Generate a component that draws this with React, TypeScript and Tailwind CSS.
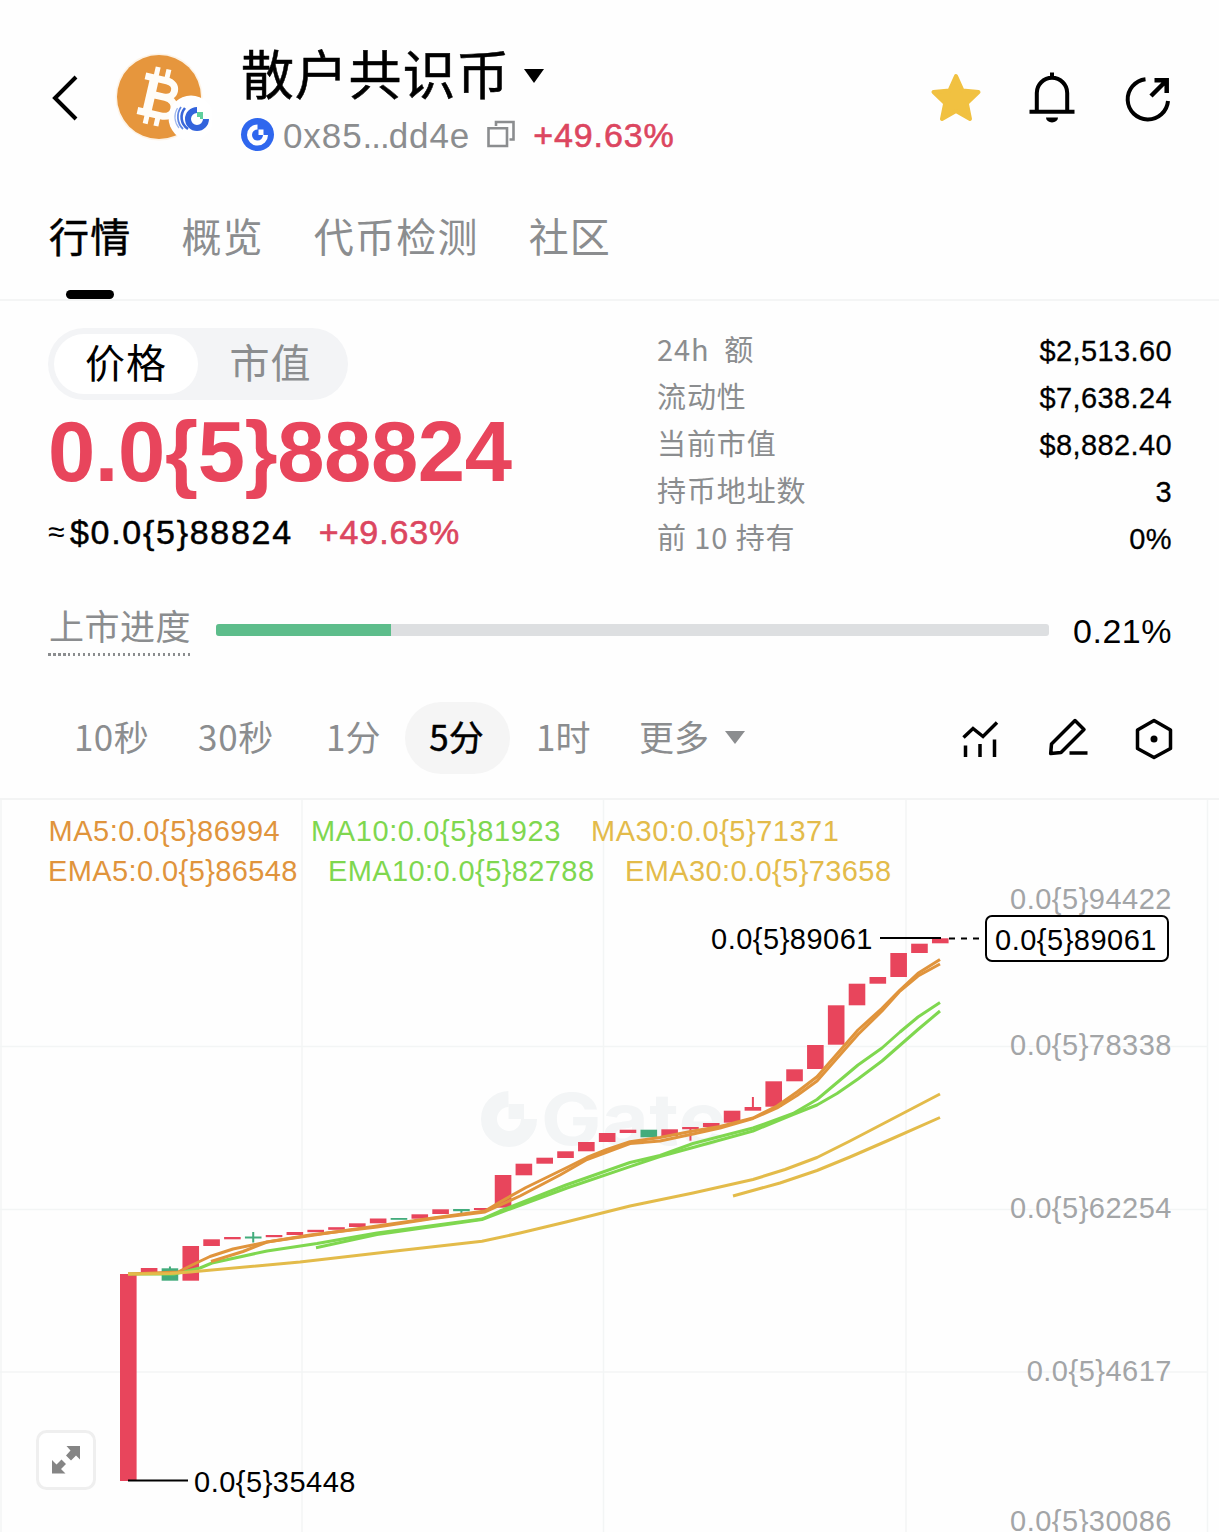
import React from "react";

const UP = "#e8455c";
const DOWN = "#43ac7c";

const tabs = ["行情", "概览", "代币检测", "社区"];

const stats = [
  { label: "24h  额", value: "$2,513.60" },
  { label: "流动性", value: "$7,638.24" },
  { label: "当前市值", value: "$8,882.40" },
  { label: "持币地址数", value: "3" },
  { label: "前 10 持有", value: "0%" },
];

// body top, body bottom, wick top, wick bottom, falling
type Candle = [number, number, number?, number?, boolean?];

const candles: Candle[] = [
  [1274, 1481],
  [1268, 1272.5],
  [1268.3, 1280.7, 1266.5, 1280, true],
  [1246, 1280.7],
  [1239.3, 1246],
  [1237, 1239.3],
  [1236.5, 1238.5, 1232, 1242.5, true],
  [1235, 1237.2],
  [1232, 1235],
  [1229.8, 1232.2],
  [1227.2, 1229.8],
  [1223.3, 1227],
  [1218.5, 1223.3],
  [1218, 1219.8, 1218, 1219, true],
  [1214.3, 1218.7],
  [1209.3, 1214],
  [1209, 1211.2, 1209, 1213, true],
  [1208, 1210],
  [1175, 1207.7],
  [1163.7, 1175.3],
  [1157.7, 1163.7],
  [1151.3, 1158],
  [1142, 1151.3],
  [1133, 1142],
  [1129.7, 1133],
  [1129.7, 1137.3, 1130, 1137, true],
  [1129.3, 1136],
  [1127, 1129.2, 1127, 1140.7],
  [1123, 1127],
  [1110.7, 1122.7],
  [1107, 1110.7, 1097, 1110],
  [1081.3, 1106.7],
  [1069.3, 1081.3],
  [1045, 1069],
  [1005.3, 1044.7],
  [983.7, 1005.3],
  [977, 983.7],
  [953, 977],
  [943.7, 953],
  [938.3, 943.3],
];

const lines = [
  {
    color: "#7fd74f",
    points:
      "128,1274 174,1274 200,1268 212,1263 267,1251 317,1243.5 377,1233 482,1219 500,1211 566,1185 630,1162.5 660,1155.5 693,1143.5 753,1128 793,1113.5 817,1099.5 858,1065 882,1048 900,1032 918,1017 940,1002.5",
  },
  {
    color: "#7fd74f",
    points:
      "316,1247.7 377,1234.5 482,1219.5 510,1209 567,1188 630,1166.7 660,1156.5 693,1147.5 753,1131 793,1114.5 817,1105 837,1093.5 858,1079 882,1061 918,1029.5 940,1011",
  },
  {
    color: "#e0943c",
    points:
      "128,1274 178,1272 190,1266 210,1256.5 233,1249 267,1242 333,1232.3 377,1226 433,1218 485,1211 500,1202 526,1187.5 567,1167.5 587,1157.5 607,1149.3 630,1141.7 660,1137.5 693,1131 720,1126.5 753,1118 777,1106 797,1092 817,1076.7 858,1030 882,1008.3 900,990 918,973.3 940,959.5",
  },
  {
    color: "#e0943c",
    points:
      "211,1261.5 243,1251.5 267,1242 310,1235 377,1227 433,1218.5 485,1212 520,1196 560,1175 587,1159.5 630,1143.5 660,1141 693,1134 720,1128 753,1118.5 777,1108 797,1095.5 817,1081 858,1034.5 882,1011 900,991 918,976 940,964",
  },
  {
    color: "#e3bb4a",
    points:
      "128,1274 170,1273.5 190,1272 300,1262 400,1250.5 482,1241.3 520,1233 566,1222 630,1206 693,1193 753,1179.5 785,1169.5 817,1157.5 850,1141 940,1094",
  },
  { color: "#e3bb4a", points: "733,1196 780,1183 817,1170.5 850,1157 888,1140.5 940,1117.5" },
];

const axis = [
  { y: 909, text: "0.0{5}94422" },
  { y: 1055, text: "0.0{5}78338" },
  { y: 1218, text: "0.0{5}62254" },
  { y: 1381, text: "0.0{5}4617" },
  { y: 1531, text: "0.0{5}30086" },
];

const cjk = "font-['Noto_Sans_CJK_SC',sans-serif]";

const TokenLogo: React.FC = () => (
  <svg viewBox="0 0 100 96" className="h-24 w-[100px] shrink-0">
    <circle cx="47" cy="49" r="43.500" fill="#fdf3e6" />
    <circle cx="47" cy="49" r="42" fill="#e6963d" />
    <g transform="rotate(13 47 49)" fill="none" stroke="#fffdf8">
      <path d="M29 31.500H51C64 31.500 64 48 51 48H39M39 48H53C68 48 68 67 53 67H29" strokeWidth="7" />
      <path d="M38.500 31V67" strokeWidth="9" />
      <path d="M39.500 20V32M50.500 20V32M39.500 66V78M50.500 66V78" strokeWidth="5" />
    </g>
    <circle cx="79" cy="70" r="22.500" fill="#fff" />
    <path d="M73 60A14 14 0 0 0 76 81" fill="none" stroke="#3a67d9" strokeWidth="2.600" />
    <path d="M69 59A17 17 0 0 0 71 81" fill="none" stroke="#5f86e2" strokeWidth="1.800" />
    <path d="M65.500 60A17 17 0 0 0 67 80" fill="none" stroke="#9db5ec" strokeWidth="1.200" />
    <path d="M85 62A9 9 0 1 0 94 71" fill="none" stroke="#3263dc" strokeWidth="6" />
    <path d="M85 64H91V71H88V69H85Z" fill="#5fcf9d" />
  </svg>
);

const Header: React.FC = () => (
  <header className="flex h-[170px] items-start pl-[50px] pr-12">
    <svg viewBox="0 0 28 46" className="mt-[75px] h-[46px] w-7 shrink-0" fill="none" stroke="#000" strokeWidth="4">
      <path d="M26 2L5 23L26 44" />
    </svg>
    <div className="ml-[34px] mt-12">
      <TokenLogo />
    </div>
    <div className="ml-[29px] mt-[42px]">
      <div className={`flex h-[64px] items-start ${cjk}`}>
        <h1 className="whitespace-nowrap text-[53px] leading-[60px] tracking-[0.8px] [-webkit-text-stroke:0.5px]">散户共识币</h1>
        <svg viewBox="0 0 20 14" className="ml-3.5 mt-[27px] h-3.5 w-5">
          <path d="M0 0H20L10 14Z" />
        </svg>
      </div>
      <div className="flex h-14 items-center">
        <div className="flex h-[33px] w-[33px] items-center justify-center rounded-full bg-[#2f67ee]">
          <svg viewBox="0 0 33 33" className="h-[33px] w-[33px]">
            <path d="M16.500 9A8 8 0 1 0 24.500 17" fill="none" stroke="#fff" strokeWidth="5" />
            <path d="M17.500 11.500H22.500V17H17.500Z" fill="#fff" />
          </svg>
        </div>
        <span className="ml-[9px] mt-[3px] text-[35px] leading-10 tracking-[0.9px] text-[#8b8d8f]">
          0x85<span className="tracking-[-1px]">...</span>dd4e
        </span>
        <svg viewBox="0 0 28 28" className="ml-[17px] h-7 w-7" fill="none" stroke="#8b8d8f" strokeWidth="2.600">
          <path d="M1.500 8.300H20V26H1.500ZM9 6V2H26.500V19.500H22.500" />
        </svg>
        <span className="ml-[18px] mt-0.5 text-[34px] leading-10 tracking-[0.9px] text-[#dc4660] [-webkit-text-stroke:0.6px]">+49.63%</span>
      </div>
    </div>
    <div className="ml-auto mt-[72px] flex items-center">
      <svg viewBox="0 0 52 52" className="h-[52px] w-[52px]">
        <path
          d="M26 4L32.500 18.500L48.500 20L36.800 31.200L40 47L26 39L12 47L15.200 31.200L3.500 20L19.500 18.500Z"
          fill="#f1c141"
          stroke="#f1c141"
          strokeWidth="4"
          strokeLinejoin="round"
        />
      </svg>
      <svg viewBox="0 0 48 52" className="ml-[46px] h-[52px] w-12" fill="none" stroke="#000" strokeWidth="4">
        <path d="M1.500 39.700H46.500M8.800 39V21A15.200 15.200 0 0 1 39.200 21V39M24 6V0.500" />
        <path d="M18 45.500H30A6 5 0 0 1 18 45.500Z" fill="#000" stroke="none" />
      </svg>
      <svg viewBox="0 0 46 52" className="ml-[49px] h-[52px] w-[46px]" fill="none" stroke="#000" strokeWidth="4">
        <path d="M20.500 7.200A20.200 20.200 0 1 0 43 29" />
        <path d="M26 24L42 8M29.500 8.300H41.700V21" strokeWidth="4.500" />
      </svg>
    </div>
  </header>
);

const Tabs: React.FC = () => (
  <nav className={`flex h-[131px] gap-[50px] border-b-2 border-[#f4f5f5] pl-[49px] pt-[35px] text-[40px] tracking-[1.2px] ${cjk}`}>
    {tabs.map((tab, i) => (
      <div key={tab} className="flex flex-col items-center">
        <span className={i === 0 ? "leading-[61px] text-black [-webkit-text-stroke:0.5px]" : "leading-[61px] text-[#8b8d8f]"}>{tab}</span>
        {i === 0 && <span className="mt-6 h-[9px] w-12 shrink-0 rounded-full bg-black" />}
      </div>
    ))}
  </nav>
);

const PriceSummary: React.FC = () => (
  <section className="flex h-[259px] justify-between pl-12 pr-[47px] pt-[27px]">
    <div>
      <div className={`flex h-[72px] w-[300px] items-center rounded-full bg-[#f3f4f6] p-1.5 text-[40px] tracking-[1px] ${cjk}`}>
        <span className="flex h-[60px] w-36 items-center justify-center rounded-full bg-white pb-1.5 leading-none">价格</span>
        <span className="flex h-[60px] w-36 items-center justify-center pb-1.5 pl-px leading-none text-[#8b8d8f]">市值</span>
      </div>
      <div className="mt-[7px] h-[90px] whitespace-nowrap text-[85px] font-bold leading-[90px] tracking-[-0.4px] text-[#e8455c]">0.0{"{5}"}88824</div>
      <div className="mt-[15px] flex h-10 items-center whitespace-nowrap text-[34px] leading-10 tracking-[1.7px]">
        <span className="w-[22px] text-[30px] tracking-normal">≈</span>
        <span className="[-webkit-text-stroke:0.5px]">$0.0{"{5}"}88824</span>
        <span className="ml-[26px] tracking-[0.9px] text-[#dc4660] [-webkit-text-stroke:0.6px]">+49.63%</span>
      </div>
    </div>
    <div className="-mt-[3px] w-[516px]">
      {stats.map((row) => (
        <div key={row.label} className="flex h-[47px] items-center justify-between whitespace-pre">
          <span className={`pl-px text-[29px] leading-[47px] tracking-[0.9px] text-[#8b8d8f] ${cjk}`}>{row.label}</span>
          <span className="mt-1.5 text-[29px] leading-[47px] tracking-[0.4px] [-webkit-text-stroke:0.3px]">{row.value}</span>
        </div>
      ))}
    </div>
  </section>
);

const Progress: React.FC = () => (
  <section className="flex h-[142px] items-start pl-12 pr-[47px] pt-[43px]">
    <span className={`h-[53px] w-[142px] whitespace-nowrap bg-[repeating-linear-gradient(90deg,#8b8d8f_0_2.5px,transparent_2.5px_5px)] bg-[length:100%_3px] bg-bottom bg-no-repeat pl-px text-[35px] leading-[44px] tracking-[0.5px] text-[#8b8d8f] ${cjk}`}>
      上市进度
    </span>
    <div className="ml-[26px] mt-[21px] h-3 w-[833px] overflow-hidden rounded-[3px] bg-[#dddfe1]">
      <div className="h-full w-[175px] bg-[#5dbd8b]" />
    </div>
    <span className="ml-auto mt-2 text-[34px] leading-10 tracking-[0.5px]">0.21%</span>
  </section>
);

const Intervals: React.FC = () => (
  <section className={`flex h-[98px] items-start border-b-2 border-[#f3f4f4] text-[35px] leading-[67px] text-[#8b8d8f] ${cjk}`}>
    <span className="ml-[74px] w-[124px] tracking-[0.4px]">10秒</span>
    <span className="w-[128px] tracking-[0.7px]">30秒</span>
    <span className="w-[79px]">1分</span>
    <span className="h-[72px] w-[105px] rounded-full bg-[#f5f5f5] pr-0.5 text-center text-black [-webkit-text-stroke:0.5px]">5分</span>
    <span className="ml-[26px] w-[103px]">1时</span>
    <span className="w-[72px]">更多</span>
    <svg viewBox="0 0 20 13" className="ml-[14px] mt-[29px] h-[13px] w-5" fill="#8b8d8f">
      <path d="M0 0H20L10 13Z" />
    </svg>
    <div className="ml-auto mr-[45px] mt-[15px] flex gap-[46px]">
      <svg viewBox="0 0 40 44" className="h-11 w-10" fill="none" stroke="#000" strokeWidth="3.500">
        <path d="M1.500 20.500L11 11.500L21 19.500L35 5.500M3.500 28.500V40M18 27V40M32.500 22.500V40" />
      </svg>
      <svg viewBox="0 0 40 44" className="h-11 w-10" fill="none" stroke="#000" strokeWidth="3.500" strokeLinejoin="round">
        <path d="M27 3.500L36 12.500L13 35.500L2.700 36.500L3.500 27ZM21.500 36H39.500" />
      </svg>
      <svg viewBox="0 0 40 44" className="h-11 w-10" fill="none" stroke="#000" strokeWidth="3.500" strokeLinejoin="round">
        <path d="M20 3.500L36.500 13V31.500L20 40.500L3.500 31.500V13Z" />
        <circle cx="20" cy="22" r="3.500" fill="#000" stroke="none" />
      </svg>
    </div>
  </section>
);

const Chart: React.FC = () => (
  <svg viewBox="0 800 1219 732" className="block h-[732px] w-full font-['Liberation_Sans',Arial,sans-serif] text-[29px] tracking-[0.5px]">
    <path d="M1 800V1532M302 800V1532M603.500 800V1532M906 800V1532M1207.500 800V1532M0 1046.500H1207M0 1209.500H1207M0 1372H1207" stroke="#f3f5f5" strokeWidth="1.500" fill="none" />
    <g fill="none" stroke="#f3f5f6">
      <path d="M508.500 1099A20 20 0 1 0 529 1119" strokeWidth="16" />
      <path d="M508.500 1104H524V1119H508.500Z" fill="#f3f5f6" stroke="none" />
    </g>
    <text x="541" y="1145" fill="#f3f5f6" textLength="186" lengthAdjust="spacingAndGlyphs" className="font-['Inter',sans-serif] text-[72px] font-bold">Gate</text>

    {candles.map(([top, bottom, high, low, falling], i) => {
      const x = 128.3 + i * 20.82;
      const color = falling ? DOWN : UP;
      return (
        <g key={i} fill={color}>
          <rect x={x - 8.3} y={top} width={16.6} height={bottom - top} />
          {high && low && <rect x={x - 1} y={high} width={2} height={low - high} />}
        </g>
      );
    })}
    {lines.map((line) => (
      <polyline key={line.points} points={line.points} fill="none" stroke={line.color} strokeWidth="3" strokeLinejoin="round" />
    ))}

    <g fill="#e0943c">
      <text x="48.500" y="841">MA5:0.0{"{5}"}86994</text>
      <text x="48" y="881" className="tracking-[0.4px]">EMA5:0.0{"{5}"}86548</text>
    </g>
    <g fill="#7fd74f">
      <text x="311" y="841" className="tracking-[0.6px]">MA10:0.0{"{5}"}81923</text>
      <text x="328" y="881" className="tracking-[0.4px]">EMA10:0.0{"{5}"}82788</text>
    </g>
    <g fill="#e3bb4a">
      <text x="591" y="841">MA30:0.0{"{5}"}71371</text>
      <text x="625" y="881" className="tracking-[0.4px]">EMA30:0.0{"{5}"}73658</text>
    </g>
    <g fill="#a3a5a7" textAnchor="end">
      {axis.map((tick) => (
        <text key={tick.text} x="1172" y={tick.y}>{tick.text}</text>
      ))}
    </g>

    <path d="M880 938H941M128 1480.500H188" stroke="#000" strokeWidth="2" />
    <path d="M949 938.500H985" stroke="#000" strokeWidth="2" strokeDasharray="6 6" />
    <rect x="986" y="916" width="182" height="45" rx="6" fill="#fff" stroke="#000" strokeWidth="2" />
    <text x="711" y="949">0.0{"{5}"}89061</text>
    <text x="995" y="950">0.0{"{5}"}89061</text>
    <text x="194" y="1492">0.0{"{5}"}35448</text>

    <rect x="37.500" y="1431.500" width="57" height="57" rx="9" fill="#fff" stroke="#efefef" strokeWidth="3" />
    <g fill="#858585">
      <path d="M66.500 1446H80V1459.500L76 1455.500L71 1460.500L66 1455.500L70.500 1450.500Z" />
      <path d="M52 1460V1473.500H65.500L61 1469L66 1464L61.500 1459.500L56.500 1464.500Z" />
    </g>
  </svg>
);

const App: React.FC = () => {
  return (
    <main className="h-[1532px] w-[1219px] overflow-hidden bg-[#fefefe] font-['Liberation_Sans',Arial,sans-serif] text-black">
      <Header />
      <Tabs />
      <PriceSummary />
      <Progress />
      <Intervals />
      <Chart />
    </main>
  );
};

export default App;
